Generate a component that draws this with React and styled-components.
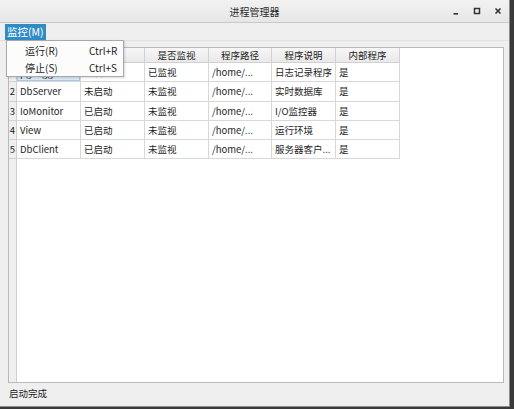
import React from "react";
import styled, { createGlobalStyle } from "styled-components";

const GlobalStyle = createGlobalStyle`
  html, body { margin: 0; padding: 0; }
  body {
    background: #3a3a3a;
    font-family: "Noto Sans CJK SC", "Noto Sans", sans-serif;
    font-size: 9.5px;
    color: #1e1e1e;
  }
`;

const Window = styled.div`
  position: relative;
  width: 509px;
  height: 406px;
  border-right: 1px solid #8c8c8c;
  border-bottom: 1px solid #8c8c8c;
  background: #efefef;
  display: flex;
  flex-direction: column;
`;

const TitleBar = styled.div`
  height: 23px;
  display: grid;
  grid-template-columns: 1fr auto 1fr;
  align-items: center;
  background: linear-gradient(#f2f2f2, #e6e6e6);
  border-bottom: 1px solid #c9c9c9;
  box-sizing: border-box;
`;

const Title = styled.div`
  font-size: 10px;
  color: #2a2a2a;
  grid-column: 2;
`;

const WinButtons = styled.div`
  justify-self: end;
  display: flex;
  align-items: center;
  gap: 9px;
  padding-right: 5px;
`;

const WinBtn = styled.div`
  width: 12px;
  height: 13px;
  display: flex;
  align-items: center;
  justify-content: center;
`;

const MenuBar = styled.div`
  height: 18px;
  display: flex;
  align-items: center;
  padding-left: 5px;
  background: #efefef;
  border-bottom: 1px solid #e2e2e2;
  box-sizing: border-box;
`;

const MenuTitle = styled.div`
  height: 16px;
  padding: 0 2px;
  font-size: 10.5px;
  display: flex;
  align-items: center;
  background: ${(p) => (p.$active ? "#308cc6" : "transparent")};
  color: ${(p) => (p.$active ? "#fff" : "#1e1e1e")};
`;

const Dropdown = styled.div`
  position: absolute;
  left: 6px;
  top: 40px;
  width: 116px;
  height: 34px;
  background: #fcfcfc;
  border: 1px solid #a9a9a9;
  box-shadow: 1px 1px 2px rgba(0, 0, 0, 0.15);
  padding-top: 1px;
  box-sizing: content-box;
  z-index: 5;
`;

const DropItem = styled.div`
  height: 17px;
  display: grid;
  grid-template-columns: 64px 1fr;
  align-items: center;
  padding-left: 18px;
  font-size: 10px;
`;

const Content = styled.div`
  flex: 1;
  display: flex;
  flex-direction: column;
  padding: 6px 5px 0 8px;
  min-height: 0;
`;

const Frame = styled.div`
  flex: 1;
  display: flex;
  background: #fff;
  border: 1px solid #b9b9b9;
  min-height: 0;
`;

const VHeader = styled.div`
  width: 7px;
  background: #efefef;
  border-right: 1px solid #cfcfcf;
  display: flex;
  flex-direction: column;
`;

const Corner = styled.div`
  height: 14px;
  border-bottom: 1px solid #d2d2d2;
  background: linear-gradient(#f6f6f6, #e9e9e9);
`;

const RowNum = styled.div`
  height: 18.3px;
  border-bottom: 1px solid #d2d2d2;
  display: flex;
  align-items: center;
  justify-content: center;
  font-size: 9.5px;
`;

const Body = styled.div`
  flex: 1;
  display: flex;
  flex-direction: column;
`;

const Row = styled.div`
  display: grid;
  grid-template-columns: repeat(3, 64px) 63px 64px 64px 64px;
`;

const HeadCell = styled.div`
  height: 14px;
  display: flex;
  align-items: center;
  justify-content: center;
  background: linear-gradient(#f7f7f7, #e9e9e9);
  border-right: 1px solid #d0d0d0;
  border-bottom: 1px solid #d0d0d0;
  white-space: nowrap;
  overflow: hidden;
`;

const Cell = styled.div`
  height: 18.3px;
  display: flex;
  align-items: center;
  padding-left: 3px;
  border-right: 1px solid #d8d8d8;
  border-bottom: 1px solid #d8d8d8;
  white-space: nowrap;
  overflow: hidden;
  background: ${(p) => (p.$selected ? "#dbe9f6" : "transparent")};
  box-shadow: ${(p) => (p.$selected ? "inset 0 0 0 1px #a9c8e6" : "none")};
`;

const StatusBar = styled.div`
  height: 23px;
  display: flex;
  align-items: center;
  padding: 0 0 4px 9px;
  box-sizing: border-box;
`;

const headers = ["名称", "状态", "是否监视", "程序路径", "程序说明", "内部程序"];
const rows = [
  ["pgLogger", "未启动", "已监视", "/home/...", "日志记录程序", "是"],
  ["DbServer", "未启动", "未监视", "/home/...", "实时数据库", "是"],
  ["IoMonitor", "已启动", "未监视", "/home/...", "I/O监控器", "是"],
  ["View", "已启动", "未监视", "/home/...", "运行环境", "是"],
  ["DbClient", "已启动", "未监视", "/home/...", "服务器客户...", "是"],
];

export default function App() {
  return (
    <>
      <GlobalStyle />
      <Window>
        <TitleBar>
          <Title>进程管理器</Title>
          <WinButtons>
            <WinBtn>
              <svg width="8" height="8" viewBox="0 0 8 8">
                <rect x="1.5" y="6" width="4.5" height="1.6" fill="#333" />
              </svg>
            </WinBtn>
            <WinBtn>
              <svg width="8" height="8" viewBox="0 0 8 8">
                <rect x="1.5" y="1.5" width="5" height="5" fill="none" stroke="#333" strokeWidth="1.5" />
              </svg>
            </WinBtn>
            <WinBtn>
              <svg width="8" height="8" viewBox="0 0 8 8">
                <path d="M1.5 1.5 L6.5 6.5 M6.5 1.5 L1.5 6.5" stroke="#333" strokeWidth="1.6" />
              </svg>
            </WinBtn>
          </WinButtons>
        </TitleBar>
        <MenuBar>
          <MenuTitle $active>监控(M)</MenuTitle>
        </MenuBar>
        <Dropdown>
          <DropItem>
            <span>运行(R)</span>
            <span>Ctrl+R</span>
          </DropItem>
          <DropItem>
            <span>停止(S)</span>
            <span>Ctrl+S</span>
          </DropItem>
        </Dropdown>
        <Content>
          <Frame>
            <VHeader>
              <Corner />
              {rows.map((_, i) => (
                <RowNum key={i}>{i + 1}</RowNum>
              ))}
            </VHeader>
            <Body>
              <Row>
                {headers.map((h) => (
                  <HeadCell key={h}>{h}</HeadCell>
                ))}
              </Row>
              {rows.map((r, i) => (
                <Row key={i}>
                  {r.map((c, j) => (
                    <Cell key={j} $selected={i === 0 && j === 0}>
                      {c}
                    </Cell>
                  ))}
                </Row>
              ))}
            </Body>
          </Frame>
        </Content>
        <StatusBar>启动完成</StatusBar>
      </Window>
    </>
  );
}
